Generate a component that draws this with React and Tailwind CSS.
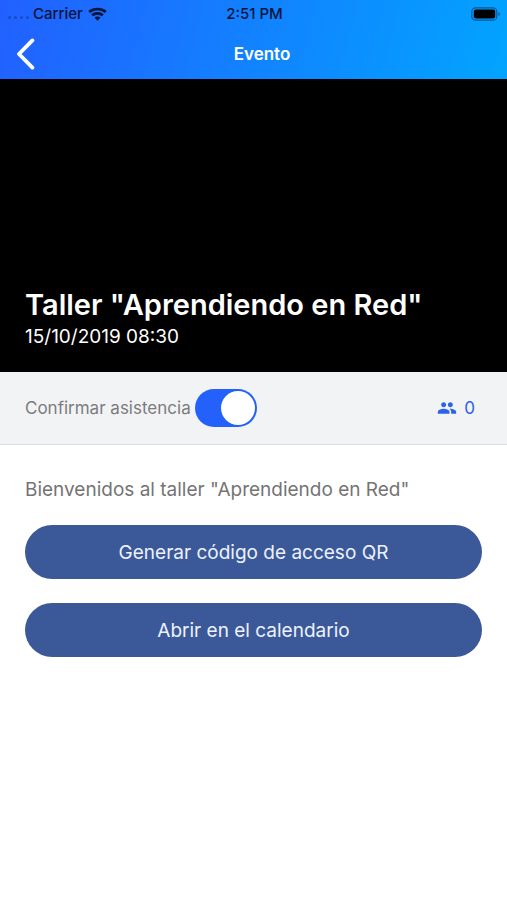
import { useState } from "react";
import { MdPeople } from "react-icons/md";

function StatusBar() {
  return (
    <div className="grid h-[27px] grid-cols-3 items-center pr-[6px] pl-[8px] text-[15px] leading-[20px] font-medium text-[#05143a]">
      <div className="flex items-center">
        <span className="mt-[8px] flex gap-[3px]" aria-hidden="true">
          {[0, 1, 2, 3].map((dot) => (
            <i key={dot} className="size-[3px] rounded-full bg-[#1a4cc4]" />
          ))}
        </span>
        <span className="ml-[4px]">Carrier</span>
        <svg className="ml-[5px] h-[14px] w-[19px]" viewBox="0 0 19 14" aria-hidden="true">
          <g fill="none" stroke="currentColor" strokeWidth="2.7">
            <path d="M1.2 5 C5.8 1 13.2 1 17.8 5" />
            <path d="M4.1 8.3 C7.2 5.6 11.8 5.6 14.9 8.3" />
          </g>
          <path d="M6.5 10.6 C8.2 9 10.8 9 12.5 10.6 L9.5 13.7 Z" fill="currentColor" />
        </svg>
      </div>
      <span className="text-center">2:51 PM</span>
      <svg className="h-[14px] w-[30px] justify-self-end" viewBox="0 0 30 14" aria-hidden="true">
        <rect x=".8" y=".8" width="25" height="12.4" rx="3.8" fill="none" stroke="#07569b" strokeWidth="1.2" />
        <rect x="2.8" y="2.6" width="21.4" height="8.8" rx="2" fill="#000" />
        <path d="M27.5 5 C29.3 5.6 29.3 8.4 27.5 9 Z" fill="#07569b" />
      </svg>
    </div>
  );
}

function NavBar() {
  return (
    <nav className="grid h-[52px] grid-cols-[1fr_auto_1fr] items-center pt-[2px] pl-[17px]">
      <button type="button" aria-label="Volver" className="justify-self-start">
        <svg className="h-[32px] w-[18px] text-white" viewBox="0 0 18 32" aria-hidden="true">
          <path d="M15.4 2.4 L2 16 L15.4 29.6" fill="none" stroke="currentColor" strokeWidth="3.8" strokeLinecap="round" strokeLinejoin="round" />
        </svg>
      </button>
      <h1 className="text-[17px] leading-[24px] font-semibold text-white">Evento</h1>
    </nav>
  );
}

function ActionButton({ children }) {
  return (
    <button type="button" className="h-[54px] w-full rounded-full bg-[#3b5998] pt-[2px] text-[19px] leading-[24px] text-[#edf2fb]">
      {children}
    </button>
  );
}

export default function App() {
  const [attending, setAttending] = useState(true);

  return (
    <div className="min-h-screen bg-white font-['Inter','Liberation_Sans',sans-serif]">
      <header className="bg-[linear-gradient(105deg,#2260ff_0%,#02a4ff_100%)]">
        <StatusBar />
        <NavBar />
      </header>

      <section className="flex h-[293px] flex-col justify-end bg-black px-[25px] pb-[22px] text-white">
        <h2 className="text-[29px] leading-[38px] font-semibold">Taller "Aprendiendo en Red"</h2>
        <p className="text-[19px] leading-[26px]">15/10/2019 08:30</p>
      </section>

      <section className="flex h-[73px] items-center justify-between border-b border-[#dcdee1] bg-[#f1f3f5] pr-[32px] pl-[25px]">
        <label className="flex cursor-pointer items-center gap-[4px] text-[17px] leading-[24px] text-[#7c7c7e]">
          Confirmar asistencia
          <input
            type="checkbox"
            role="switch"
            checked={attending}
            onChange={(event) => setAttending(event.target.checked)}
            className="flex h-[38px] w-[62px] shrink-0 appearance-none items-center rounded-full bg-[#c9ccd1] p-[2px] before:size-[34px] before:rounded-full before:bg-white before:content-[''] checked:justify-end checked:bg-[#2460fa]"
          />
        </label>
        <div className="flex items-center gap-[7px] text-[17px] leading-[24px] text-[#2c62e8]">
          <MdPeople className="size-[20px]" aria-hidden="true" />
          <span>0</span>
        </div>
      </section>

      <main className="flex flex-col px-[25px] pt-[33px]">
        <p className="mb-[23px] text-[19px] leading-[24px] text-[#747474]">Bienvenidos al taller "Aprendiendo en Red"</p>
        <div className="flex flex-col gap-[24px]">
          <ActionButton>Generar código de acceso QR</ActionButton>
          <ActionButton>Abrir en el calendario</ActionButton>
        </div>
      </main>
    </div>
  );
}
